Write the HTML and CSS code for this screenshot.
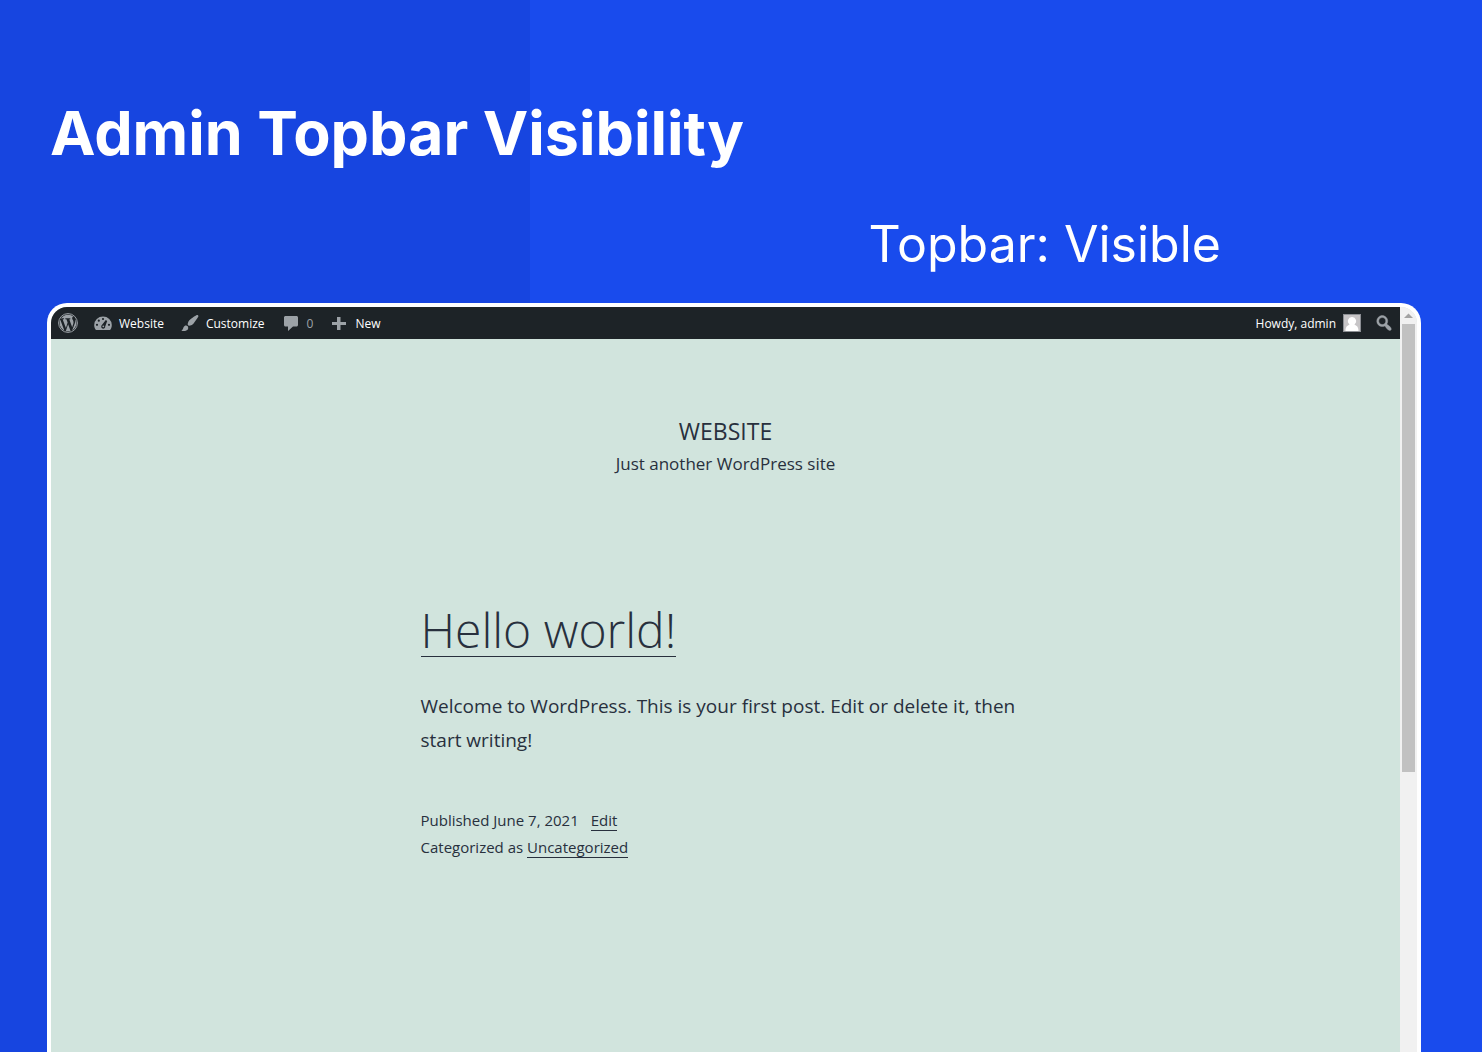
FILE: index.html
```html
<!DOCTYPE html>
<html lang="en">
<head>
<meta charset="utf-8">
<meta name="viewport" content="width=device-width, initial-scale=1">
<title>Admin Topbar Visibility</title>
<link rel="stylesheet" href="styles.css">
</head>
<body>
<header class="intro">
  <h1 class="intro-title">Admin Topbar Visibility</h1>
  <p class="intro-state">Topbar: Visible</p>
</header>
<main class="browser">
  <div class="viewport">
    <nav class="adminbar" aria-label="Toolbar">
      <a class="ab-item" href="#" aria-label="About WordPress">
        <svg class="icon" viewBox="0 0 20 20"><circle class="icon-ring" cx="10" cy="10" r="9.400"/><path transform="translate(.6 .6) scale(.94)" d="M7.78 15.37L4.37 6.22c.55-.02 1.17-.08 1.17-.08.5-.06.44-1.13-.06-1.11 0 0-1.45.11-2.37.11-.18 0-.37 0-.58-.01C4.12 2.69 6.87 1.11 10 1.11c2.33 0 4.45.87 6.05 2.34-.68-.11-1.65.39-1.65 1.58 0 .74.45 1.36.9 2.1.35.61.55 1.36.55 2.46 0 1.49-1.4 5-1.4 5l-3.03-8.37c.54-.02.82-.17.82-.17.5-.05.44-1.25-.06-1.22 0 0-1.44.12-2.38.12-.87 0-2.33-.12-2.33-.12-.5-.03-.56 1.2-.06 1.22l.92.08 1.26 3.41zM17.41 10c.24-.64.74-1.87.43-4.25.7 1.29 1.05 2.71 1.05 4.25 0 3.29-1.73 6.24-4.4 7.78.97-2.59 1.94-5.2 2.92-7.78zM6.1 18.09C3.12 16.65 1.11 13.53 1.11 10c0-1.3.23-2.48.72-3.59C3.25 10.3 4.67 14.2 6.1 18.09zm4.03-6.63l2.58 6.98c-.86.29-1.76.45-2.71.45-.79 0-1.57-.11-2.29-.33.81-2.38 1.62-4.74 2.42-7.1z"/></svg>
      </a>
      <a class="ab-item" href="#">
        <svg class="icon" viewBox="0 0 20 20"><path d="M3 17h14c1.200-1.400 1.800-3.100 1.800-5A8.800 8.500 0 0 0 1.200 12c0 1.900.6 3.600 1.800 5z"/><g class="icon-hole"><circle cx="10" cy="6" r="1.100"/><circle cx="5.800" cy="7.700" r="1.100"/><circle cx="4" cy="11.800" r="1.100"/><circle cx="16" cy="11.800" r="1.100"/><path d="M12.800 7l1.400.9-2 5.500a2 2 0 1 1-3.300-1.300z"/></g><circle cx="10.300" cy="13.300" r=".9"/></svg>
        <span class="ab-label">Website</span>
      </a>
      <a class="ab-item" href="#">
        <svg class="icon" viewBox="0 0 20 20"><path d="M18.330 3.570s.27-.8-.31-1.360c-.53-.52-1.220-.24-1.220-.24-.61.3-5.760 3.470-7.670 5.570-.86.96-2.060 3.790-1.090 4.820.92.98 3.960-.17 4.790-1 2.060-2.060 5.210-7.170 5.500-7.790zM1.400 17.650c2.370-1.560 1.460-3.410 3.230-4.640.93-.65 2.220-.62 3.080.29.63.67.8 2.570-.16 3.460-1.570 1.450-4 1.550-6.150.89z"/></svg>
        <span class="ab-label">Customize</span>
      </a>
      <a class="ab-item" href="#" aria-label="0 comments">
        <svg class="icon" viewBox="0 0 20 20"><path d="M4.500 3h11c.8 0 1.500.7 1.500 1.500v7.500c0 .8-.7 1.500-1.500 1.500H12L7 18v-4.500H4.500c-.8 0-1.500-.7-1.500-1.500V4.500C3 3.700 3.700 3 4.500 3z"/></svg>
        <span class="ab-label ab-count">0</span>
      </a>
      <a class="ab-item" href="#">
        <svg class="icon" viewBox="0 0 20 20"><path d="M8 4h3.500v5H17v3h-5.500v5H8v-5H3V9h5z"/></svg>
        <span class="ab-label">New</span>
      </a>
      <a class="ab-item ab-account" href="#">
        <span class="ab-label">Howdy, admin</span>
        <svg class="avatar" viewBox="0 0 18 18"><rect class="avatar-edge" width="18" height="18"/><rect class="avatar-back" x="1" y="1" width="16" height="16"/><path class="avatar-person" d="M9 3a4 4 0 0 1 2.500 7.200c.4 1.300 4 .8 4 6.800h-13c0-6 3.600-5.500 4-6.800A4 4 0 0 1 9 3z"/></svg>
      </a>
      <a class="ab-item ab-search" href="#" aria-label="Search">
        <svg class="icon icon-search" viewBox="0 0 20 20"><path d="M12.140 4.180c1.870 1.870 2.110 4.750.72 6.890.12.1.22.21.36.31.2.16.47.36.81.59.34.24.56.39.66.47.42.31.73.57.94.78.32.32.6.65.84 1 .25.35.44.69.59 1.040.14.35.21.68.18 1-.02.32-.14.59-.36.81s-.49.34-.81.36c-.31.02-.65-.04-.99-.19-.35-.14-.7-.34-1.040-.59-.35-.24-.68-.52-1-.84-.21-.21-.47-.52-.77-.93-.1-.13-.25-.35-.47-.66-.22-.32-.4-.57-.56-.78-.16-.2-.29-.35-.44-.5-2.070 1.090-4.690.76-6.440-.98-2.140-2.150-2.140-5.640 0-7.780 2.150-2.150 5.630-2.150 7.780 0zm-1.410 6.360c1.360-1.370 1.360-3.580 0-4.950-1.370-1.370-3.590-1.370-4.950 0-1.370 1.370-1.370 3.580 0 4.950 1.360 1.370 3.580 1.370 4.950 0z"/></svg>
      </a>
    </nav>
    <header class="site-header">
      <p class="site-title">WEBSITE</p>
      <p class="site-tagline">Just another WordPress site</p>
    </header>
    <article class="post">
      <h2 class="post-title"><a href="#">Hello world!</a></h2>
      <p class="post-text">Welcome to WordPress. This is your first post. Edit or delete it, then start writing!</p>
      <footer class="post-meta">
        <p class="meta-row"><span>Published June 7, 2021</span><a class="meta-edit" href="#">Edit</a></p>
        <p class="meta-row">Categorized as&nbsp;<a href="#">Uncategorized</a></p>
      </footer>
    </article>
  </div>
  <div class="scrollbar" aria-hidden="true">
    <svg class="scroll-arrow" viewBox="0 0 17 17"><path d="M4 11l4.500-4.500L13 11z"/></svg>
    <div class="scroll-thumb"></div>
  </div>
</main>
</body>
</html>
```
FILE: styles.css
```css
* {
  box-sizing: border-box;
}

body {
  margin: 0;
  min-height: 100vh;
  display: flex;
  flex-direction: column;
  padding: 95px 61px 0 47px;
  background: linear-gradient(to right, #1745e0 530px, #194bed 530px);
  color: #28303d;
  font-family: "Open Sans", "Noto Sans", sans-serif;
}

h1,
h2,
p {
  margin: 0;
  font-weight: 400;
}

.intro {
  font-family: Inter, sans-serif;
  color: #fff;
  padding: 0 3px;
}

.intro-title {
  font-size: 61px;
  line-height: 76px;
  font-weight: 700;
}

.intro-state {
  margin: 41px 197px 27px 0;
  font-size: 50px;
  line-height: 64px;
  text-align: right;
}

.browser {
  flex: 1;
  display: flex;
  border: 4px solid #fff;
  border-bottom: 0;
  border-radius: 20px 20px 0 0;
  overflow: hidden;
  background: #d1e4dd;
}

.viewport {
  flex: 1;
  min-width: 0;
}

.adminbar {
  display: flex;
  height: 32px;
  background: #1d2327;
  font-size: 12px;
  line-height: 32px;
}

.ab-item {
  display: flex;
  align-items: center;
  gap: 6px;
  padding: 0 8px 0 7px;
  color: #fff;
  text-decoration: none;
  white-space: nowrap;
}

.ab-label {
  padding: 1px 1px 0 0;
}

.ab-count {
  color: #9ca2a7;
}

.ab-account {
  margin-left: auto;
}

.ab-account,
.ab-search {
  padding-right: 6px;
}

.icon {
  width: 20px;
  height: 20px;
  fill: #9ca2a7;
}

.icon-ring {
  fill: none;
  stroke: #9ca2a7;
}

.icon-search {
  stroke: #9ca2a7;
  stroke-width: .4;
}

.icon-hole {
  fill: #1d2327;
}

.avatar {
  width: 18px;
  height: 18px;
}

.avatar-edge {
  fill: #8c8f94;
}

.avatar-back {
  fill: #c7c5c7;
}

.avatar-person {
  fill: #fff;
}

.site-header {
  padding-top: 75px;
  text-align: center;
}

.site-title {
  font-size: 23px;
  line-height: 34px;
}

.site-tagline {
  font-size: 17px;
  line-height: 32px;
}

.post {
  width: 610px;
  max-width: 100%;
  margin: 120px auto 0;
}

.post a {
  color: inherit;
  text-decoration: none;
  border-bottom: 1px solid #28303d;
}

.post-title {
  font-size: 48px;
  font-weight: 300;
  line-height: 60px;
}

.post-title a {
  display: inline-block;
  line-height: 52px;
}

.post-text {
  margin-top: 29px;
  font-size: 19px;
  line-height: 34px;
}

.post-meta {
  margin-top: 50px;
  font-size: 15px;
  line-height: 27px;
}

.meta-row {
  display: flex;
}

.meta-row a {
  line-height: 20px;
  margin: 3px 0;
}

.meta-row .meta-edit {
  margin-left: 12px;
}

.scrollbar {
  width: 17px;
  background: #f1f1f1;
}

.scroll-arrow {
  display: block;
  height: 17px;
  fill: #a3a3a3;
}

.scroll-thumb {
  height: 448px;
  margin: 0 2px;
  background: #c1c1c1;
}
```
